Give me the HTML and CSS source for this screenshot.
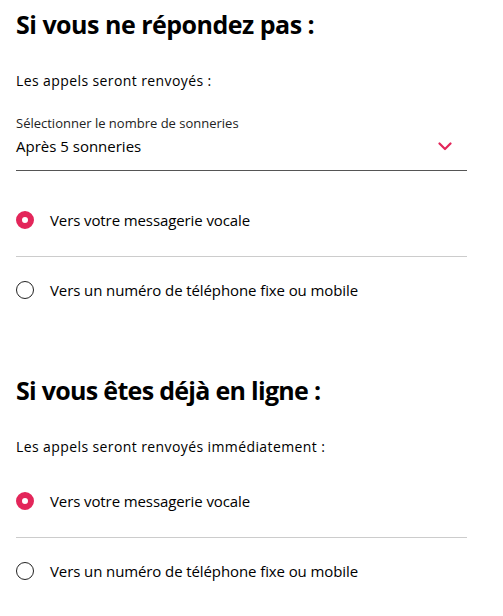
FILE: index.html
```html
<!DOCTYPE html>
<html lang="fr">
<head>
  <meta charset="UTF-8">
  <title>Renvoi d'appels</title>
  <link rel="stylesheet" href="styles.css">
</head>
<body>

  <div class="page">

    <section class="block">
      <h2 class="block-title">Si vous ne répondez pas :</h2>
      <p class="intro">Les appels seront renvoyés :</p>

      <div class="select-field">
        <label class="select-label">Sélectionner le nombre de sonneries</label>
        <div class="select-value">
          <span>Après 5 sonneries</span>
          <svg class="chevron" width="14" height="9" viewBox="0 0 14 9">
            <path d="M1.5 1.5 L7 7 L12.5 1.5" fill="none" stroke="#e3265a" stroke-width="2.2" stroke-linecap="round" stroke-linejoin="round"/>
          </svg>
        </div>
      </div>

      <ul class="options first">
        <li class="option">
          <span class="radio checked"></span>
          <span class="option-text">Vers votre messagerie vocale</span>
        </li>
        <li class="option">
          <span class="radio"></span>
          <span class="option-text">Vers un numéro de téléphone fixe ou mobile</span>
        </li>
      </ul>
    </section>

    <section class="block second">
      <h2 class="block-title">Si vous êtes déjà en ligne :</h2>
      <p class="intro">Les appels seront renvoyés immédiatement :</p>

      <ul class="options">
        <li class="option">
          <span class="radio checked"></span>
          <span class="option-text">Vers votre messagerie vocale</span>
        </li>
        <li class="option">
          <span class="radio"></span>
          <span class="option-text">Vers un numéro de téléphone fixe ou mobile</span>
        </li>
      </ul>
    </section>

  </div>

</body>
</html>
```

FILE: styles.css
```css
body { margin: 0; font-family: "Open Sans", "Noto Sans", sans-serif; color: #000; background: #fff; }
.page { width: 451px; padding: 0 16px; }

.block-title { margin: 8px 0 0; font-size: 25px; line-height: 32px; font-weight: 700; letter-spacing: -0.5px; }
.second .block-title { margin-top: 51px; letter-spacing: -0.7px; }
.intro { margin: 31px 0 0; font-size: 14px; line-height: 20px; letter-spacing: 0.4px; }

.select-field { margin-top: 23px; border-bottom: 1px solid #555; padding-bottom: 13px; }
.select-label { display: block; font-size: 13px; line-height: 18px; color: #222; }
.select-value { display: flex; align-items: center; justify-content: space-between; margin-top: 3px; font-size: 15px; line-height: 22px; padding-right: 15px; }

.options { list-style: none; margin: 10px 0 0; padding: 0; }
.options.first { margin-top: 15px; }
.option { display: flex; align-items: center; gap: 16px; padding: 21px 0; font-size: 15px; line-height: 24px; letter-spacing: -0.1px; }
.option + .option { border-top: 1px solid #ccc; }
.option:first-child { padding: 22px 0 24px; }

.radio { width: 18px; height: 18px; box-sizing: border-box; border: 1.5px solid #222; border-radius: 50%; flex: none; }
.radio.checked { border: 6px solid #e3265a; }
```
